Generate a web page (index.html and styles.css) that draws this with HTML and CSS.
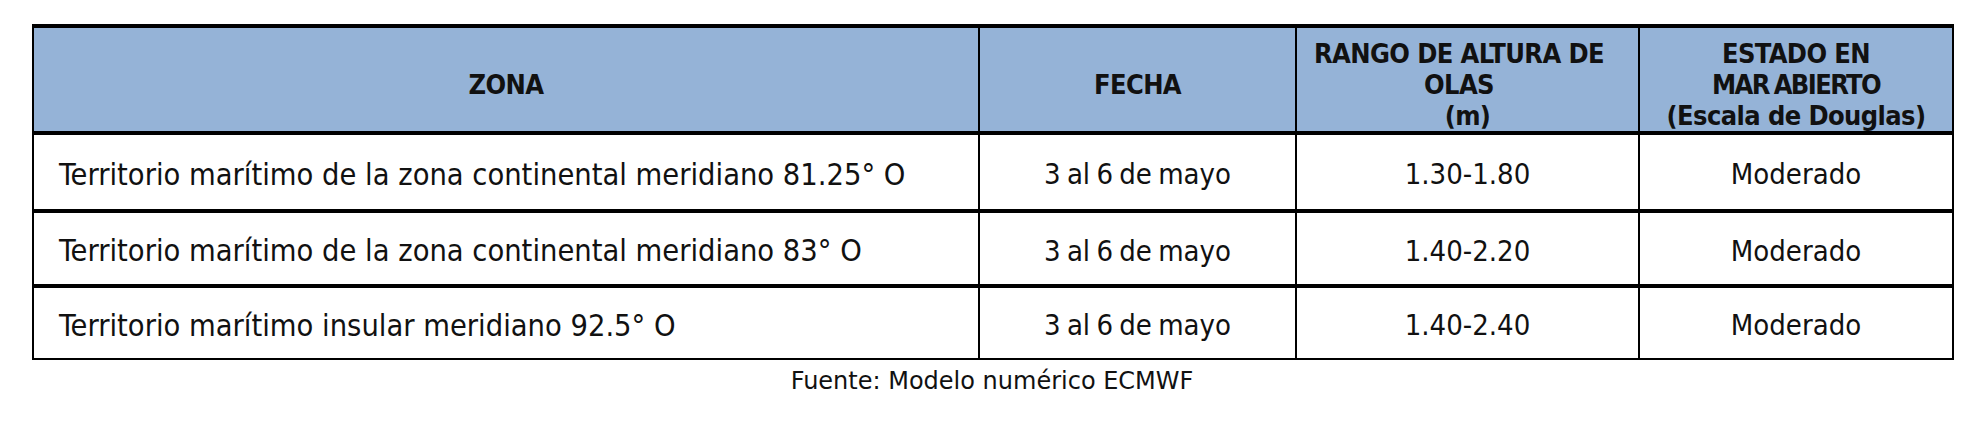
FILE: index.html
```html
<!DOCTYPE html>
<html lang="es">
<head>
<meta charset="utf-8">
<link rel="stylesheet" href="styles.css">
</head>
<body>
<div class="wrap">
<table class="tbl">
  <colgroup>
    <col class="c1"><col class="c2"><col class="c3"><col class="c4">
  </colgroup>
  <thead>
    <tr class="hrow">
      <th>ZONA</th>
      <th>FECHA</th>
      <th><span class="ln sh">RANGO DE ALTURA DE</span><span class="ln sh">OLAS</span><span class="ln">(m)</span></th>
      <th class="estado"><span class="ln">ESTADO EN</span><span class="ln tight">MAR ABIERTO</span><span class="ln">(Escala de Douglas)</span></th>
    </tr>
  </thead>
  <tbody>
    <tr class="r1">
      <td class="zona">Territorio marítimo de la zona continental meridiano 81.25° O</td>
      <td>3 al 6 de mayo</td>
      <td>1.30-1.80</td>
      <td>Moderado</td>
    </tr>
    <tr class="r2">
      <td class="zona">Territorio marítimo de la zona continental meridiano 83° O</td>
      <td>3 al 6 de mayo</td>
      <td>1.40-2.20</td>
      <td>Moderado</td>
    </tr>
    <tr class="r3">
      <td class="zona">Territorio marítimo insular meridiano 92.5° O</td>
      <td>3 al 6 de mayo</td>
      <td>1.40-2.40</td>
      <td>Moderado</td>
    </tr>
  </tbody>
</table>
<p class="source">Fuente: Modelo numérico ECMWF</p>
</div>
</body>
</html>
```
FILE: styles.css
```css
html, body {
  margin: 0;
  padding: 0;
  background: #fff;
}
.wrap {
  padding: 24px 30px 0 32px;
}
.tbl {
  width: 1920px;
  border-collapse: collapse;
  table-layout: fixed;
  font-family: "DejaVu Sans", sans-serif;
  font-stretch: condensed;
  color: #111;
  border-top: 4px solid #000;
  border-left: 2px solid #000;
  border-right: 2px solid #000;
  border-bottom: 2px solid #000;
}
.c1 { width: 946px; }
.c2 { width: 317px; }
.c3 { width: 343px; }
.c4 { width: 314px; }
.tbl th, .tbl td {
  padding: 0;
  text-align: center;
  vertical-align: middle;
  border-left: 2px solid #000;
  border-right: 2px solid #000;
}
.tbl th {
  background: #95b3d7;
  font-weight: bold;
  font-size: 27px;
  line-height: 31px;
  letter-spacing: -0.6px;
  padding-top: 10px;
}
.ln { display: block; white-space: nowrap; }
.sh { margin-left: -17px; }
.tight { letter-spacing: -1.6px; word-spacing: -2px; }
.hrow { height: 107px; }
.tbl tbody tr { border-top: 4px solid #000; }
.tbl td {
  font-size: 29px;
  font-weight: normal;
  word-spacing: -2px;
  padding-top: 4px;
}
.r1 { height: 78px; }
.r2 { height: 75px; }
.r3 { height: 73px; }
.tbl td.zona {
  text-align: left;
  padding-left: 25px;
  font-size: 30.5px;
  word-spacing: 0;
}
.source {
  margin: 7px 0 0 0;
  width: 1920px;
  text-align: center;
  font-family: "DejaVu Sans", sans-serif;
  font-size: 24px;
  color: #111;
}
```
